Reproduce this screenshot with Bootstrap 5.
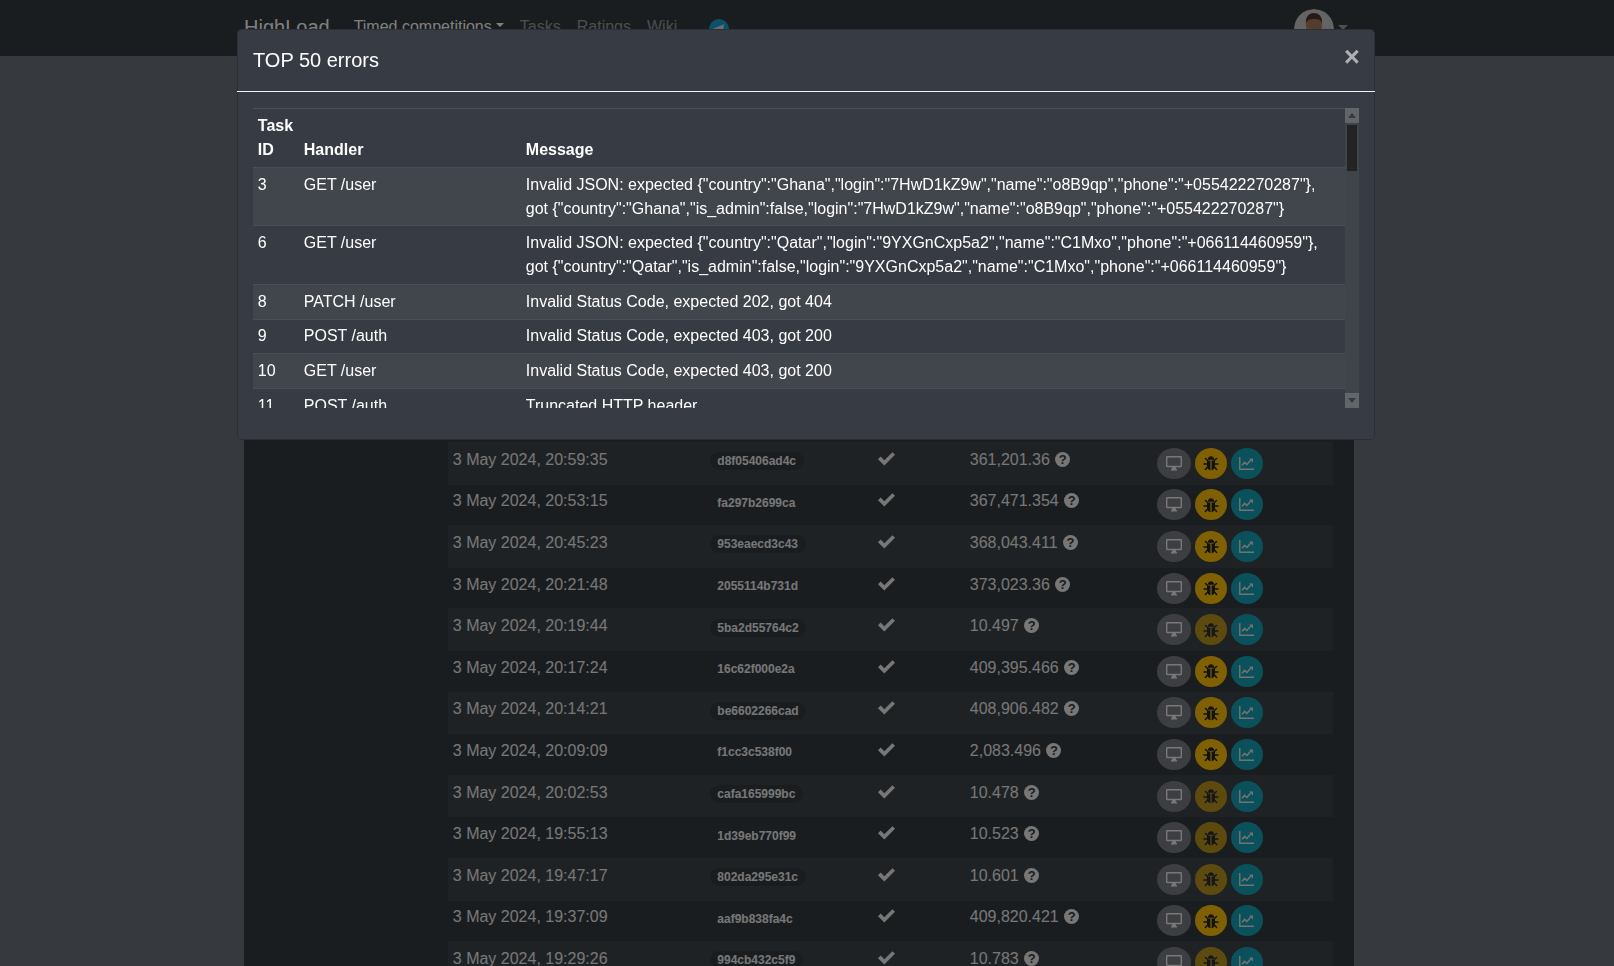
<!DOCTYPE html>
<html lang="en">
<head>
<meta charset="utf-8">
<title>HighLoad</title>
<link href="https://cdn.jsdelivr.net/npm/bootstrap@5.3.0/dist/css/bootstrap.min.css" rel="stylesheet">
<style>
html,body{height:100%;overflow:hidden}
body{font-family:"Liberation Sans",Arial,sans-serif;font-size:16px;line-height:24px;background:#6c757d;color:#eee}
.hl-shift{padding-right:16px}
.hl-nav{height:56px;padding:0 16px 0 0;align-items:flex-start;background:#343a40}
.hl-wrap{width:1110px;margin:0 auto;display:flex;align-items:flex-start;padding:0}
.hl-brand{font-size:20px;line-height:30px;padding:0;margin:12px 16px 0 0;color:#fff}
.hl-nav .nav-link{padding:14.5px 8px 0;color:rgba(255,255,255,.5)}
.hl-nav .nav-link.active{color:#fff}
.hl-tg{display:block;margin:19px 0 0 24px}
.hl-user{margin:9px 0 0 auto;display:flex;padding-right:6px;color:rgba(255,255,255,.5)}
.hl-avatar{display:block;border-radius:50%}
.hl-user-caret{margin:16px 0 0 4px;width:0;height:0;border-top:5px solid currentColor;border-left:5px solid transparent;border-right:5px solid transparent}
.hl-body{width:1110px;margin:0 auto;background:#343a40;min-height:910px;padding:386px 21px 0 204px}
.hl-runs{table-layout:fixed;width:885px;margin:0;color:#eee;--bs-table-bg:transparent;--bs-table-color:#eee;--bs-table-striped-color:#eee;--bs-table-striped-bg:rgba(255,255,255,.05);--bs-table-border-color:#3f454b;--bs-border-color:#3f454b}
.hl-runs td,.hl-errs td,.hl-errs th{padding:4.8px;border-width:1px 0 0;vertical-align:top;line-height:24px}
.hl-c1{width:257px}.hl-c2{width:168.6px}.hl-c3{width:91.4px}.hl-c4{width:187px}
.hl-hash{font-size:12px;line-height:12px;padding:3px 7.5px;font-weight:700;background:#343a40;color:#eee;vertical-align:-.5px}
.hl-tick{display:block;margin-top:3px}
.hl-q{display:inline-block;width:15px;height:15px;border-radius:50%;background:#eee;color:#343a40;font-size:13px;font-weight:700;line-height:15px;text-align:center;margin-left:1px;vertical-align:1px}
.hl-acts{display:flex;gap:4px;height:31px}
.hl-act{display:flex;align-items:center;justify-content:center;height:31px;width:32px;border-radius:50%;padding:0;border:0}
.hl-act-mon{width:34px;background:#7a7d82;color:#f0f0f0}
.hl-act-bug{background:#ffc107;color:#212529}
.hl-act-chart{background:#17a2b8;color:#e6e6e6}
.hl-act-dim{opacity:.65}
.hl-dialog{max-width:1138px;margin:29px 0 0 237px;width:1138px}
.hl-modal{background:#373b43;color:#fff;border:1px solid rgba(0,0,0,.2);border-radius:4.8px;height:411px}
.hl-mhead{margin:0 -1px;padding:15px 18px 16px 16px;border-bottom:1px solid #f2f2f2;border-radius:0;display:flex;align-items:flex-start}
.hl-title{font-size:20px;line-height:30px;font-weight:400;margin:0}
.hl-x{margin:0 0 0 auto;background:none;border:0;padding:0;color:#fff;opacity:.6;font:700 27px/24px "Liberation Sans",Arial,sans-serif;width:13px;display:block;overflow:visible;text-align:center}
.hl-mbody{padding:16px 15px 32px}
.hl-scroll{height:300px;display:flex}
.hl-view{flex:1 1 auto;min-width:0;overflow:hidden}
.hl-bar{flex:0 0 14px;display:flex;flex-direction:column;background:#3f444a}
.hl-bar-btn{height:15px;flex:none;background:#62666a;display:flex;align-items:center;justify-content:center}
.hl-bar-up{width:0;height:0;border:4px solid transparent;border-top:0;border-bottom:5px solid #36393d}
.hl-bar-down{width:0;height:0;border:4px solid transparent;border-bottom:0;border-top:5px solid #36393d}
.hl-bar-thumb{height:46px;margin:2px 2px 0;background:#232323;flex:none}
.hl-bar-fill{flex:1 1 auto}
.hl-errs{table-layout:fixed;width:100%;margin:0;color:#fff;--bs-table-bg:transparent;--bs-table-color:#fff;--bs-table-striped-color:#fff;--bs-table-striped-bg:rgba(255,255,255,.05);--bs-table-border-color:#4a4e56;--bs-border-color:#4a4e56}
.hl-errs th{font-weight:700;vertical-align:bottom;padding-bottom:5.1px}
.hl-e1{width:46px}.hl-e2{width:222px}
</style>
</head>
<body>
<nav class="navbar navbar-expand navbar-dark hl-nav">
  <div class="hl-wrap">
    <a class="navbar-brand hl-brand" href="#">HighLoad</a>
    <ul class="navbar-nav">
      <li class="nav-item dropdown"><a class="nav-link active dropdown-toggle" href="#">Timed competitions</a></li>
      <li class="nav-item"><a class="nav-link" href="#">Tasks</a></li>
      <li class="nav-item"><a class="nav-link" href="#">Ratings</a></li>
      <li class="nav-item"><a class="nav-link" href="#">Wiki</a></li>
    </ul>
    <svg class="hl-tg" width="20" height="20" viewBox="0 0 20 20" aria-label="Telegram"><circle cx="10" cy="10" r="10" fill="#1d9ed6"/><path d="M3.800 9.800 15.200 5.200 13.400 15 9.900 12.500 8.200 14 7.800 11.200z" fill="#d9d9d9"/></svg>
    <div class="hl-user">
      <svg class="hl-avatar" width="40" height="40" viewBox="0 0 40 40" aria-label="User"><circle cx="20" cy="20" r="20" fill="#c9c9c9"/><ellipse cx="20" cy="17" rx="8" ry="11" fill="#a8785f"/><path d="M12 15c-1-8 4-11 8-11s9 3 8 11c-1-4-3-5-8-5s-7 1-8 5z" fill="#4a352c"/></svg>
      <span class="hl-user-caret"></span>
    </div>
  </div>
</nav>

<div class="hl-shift">
  <main class="hl-body">
    <table class="table table-striped hl-runs">
      <colgroup><col class="hl-c1"><col class="hl-c2"><col class="hl-c3"><col class="hl-c4"><col></colgroup>
      <tbody id="runs"></tbody>
    </table>
  </main>
</div>

<div class="modal-backdrop fade show"></div>
<div class="modal fade show d-block" tabindex="-1">
  <div class="modal-dialog hl-dialog">
    <div class="modal-content hl-modal">
      <div class="modal-header hl-mhead">
        <h5 class="modal-title hl-title">TOP 50 errors</h5>
        <button type="button" class="hl-x" aria-label="Close">×</button>
      </div>
      <div class="modal-body hl-mbody">
        <div class="hl-scroll">
          <div class="hl-view">
            <table class="table table-striped hl-errs">
              <colgroup><col class="hl-e1"><col class="hl-e2"><col></colgroup>
              <thead><tr><th>Task ID</th><th>Handler</th><th>Message</th></tr></thead>
              <tbody>
                <tr><td>3</td><td>GET /user</td><td>Invalid JSON: expected {"country":"Ghana","login":"7HwD1kZ9w","name":"o8B9qp","phone":"+055422270287"}, got {"country":"Ghana","is_admin":false,"login":"7HwD1kZ9w","name":"o8B9qp","phone":"+055422270287"}</td></tr>
                <tr><td>6</td><td>GET /user</td><td>Invalid JSON: expected {"country":"Qatar","login":"9YXGnCxp5a2","name":"C1Mxo","phone":"+066114460959"}, got {"country":"Qatar","is_admin":false,"login":"9YXGnCxp5a2","name":"C1Mxo","phone":"+066114460959"}</td></tr>
                <tr><td>8</td><td>PATCH /user</td><td>Invalid Status Code, expected 202, got 404</td></tr>
                <tr><td>9</td><td>POST /auth</td><td>Invalid Status Code, expected 403, got 200</td></tr>
                <tr><td>10</td><td>GET /user</td><td>Invalid Status Code, expected 403, got 200</td></tr>
                <tr><td>11</td><td>POST /auth</td><td>Truncated HTTP header</td></tr>
              </tbody>
            </table>
          </div>
          <div class="hl-bar">
            <div class="hl-bar-btn"><span class="hl-bar-up"></span></div>
            <div class="hl-bar-thumb"></div>
            <div class="hl-bar-fill"></div>
            <div class="hl-bar-btn"><span class="hl-bar-down"></span></div>
          </div>
        </div>
      </div>
    </div>
  </div>
</div>

<script>
var rows=[
["20:59:35","d8f05406ad4c","361,201.36",0],["20:53:15","fa297b2699ca","367,471.354",0],["20:45:23","953eaecd3c43","368,043.411",0],["20:21:48","2055114b731d","373,023.36",0],["20:19:44","5ba2d55764c2","10.497",1],["20:17:24","16c62f000e2a","409,395.466",0],["20:14:21","be6602266cad","408,906.482",0],["20:09:09","f1cc3c538f00","2,083.496",0],["20:02:53","cafa165999bc","10.478",1],["19:55:13","1d39eb770f99","10.523",1],["19:47:17","802da295e31c","10.601",1],["19:37:09","aaf9b838fa4c","409,820.421",0],["19:29:26","994cb432c5f9","10.783",1]];
var tick='<svg class="hl-tick" width="17" height="15" viewBox="0 0 17 15"><path d="M0 8.200 2.600 5.600 6.300 9.300 14.400 1.200 17 3.800 6.300 14.500z" fill="#eee"/></svg>';
var mon='<svg width="16" height="15" viewBox="0 0 16 15"><path fill="currentColor" fill-rule="evenodd" d="M1.200 0h13.600C15.500 0 16 .5 16 1.200v8.900c0 .7-.5 1.200-1.200 1.200H9.800c0 1 .4 1.600 1.200 2.300v.9H5v-.9c.8-.7 1.200-1.300 1.200-2.300H1.200C.5 11.300 0 10.800 0 10.100V1.200C0 .5.500 0 1.200 0zM1.400 1.400v8.300h13.200V1.400z"/></svg>';
var bug='<svg width="16" height="16" viewBox="0 0 16 16"><g fill="none" stroke="currentColor" stroke-width="1.500" stroke-linecap="round"><path d="M4.400 5.300 2.500 3.500M11.600 5.300l1.900-1.800M3.800 9H1M12.200 9H15M4.400 12.300 2.400 14.500M11.600 12.300l2 2.200"/></g><path fill="currentColor" d="M4.800 4.700C4.800 2.800 6.200 1.300 8 1.300s3.200 1.500 3.200 3.400z"/><path fill="currentColor" d="M4 5.500h3.400v9.800C5.300 15 4 12.900 4 10.500zM8.600 5.500H12v5c0 2.400-1.300 4.500-3.400 4.800z"/></svg>';
var chart='<svg width="15" height="13" viewBox="0 0 16 14"><path fill="currentColor" d="M0 0h1.500v12.500H16V14H0z"/><path fill="none" stroke="currentColor" stroke-width="1.600" d="M3.200 8.800 6 5.800l2.400 2.200 4-4.600"/><path fill="currentColor" d="M10.800 1.600H15v4.200z"/></svg>';
document.getElementById('runs').innerHTML=rows.map(function(r){return '<tr><td>3 May 2024, '+r[0]+'</td><td><span class="badge rounded-pill hl-hash">'+r[1]+'</span></td><td>'+tick+'</td><td>'+r[2]+' <span class="hl-q">?</span></td><td><div class="hl-acts"><a class="hl-act hl-act-mon">'+mon+'</a><a class="hl-act hl-act-bug'+(r[3]?' hl-act-dim':'')+'">'+bug+'</a><a class="hl-act hl-act-chart">'+chart+'</a></div></td></tr>'}).join('');
</script>
<script src="https://cdn.jsdelivr.net/npm/bootstrap@5.3.0/dist/js/bootstrap.bundle.min.js"></script>
</body>
</html>
